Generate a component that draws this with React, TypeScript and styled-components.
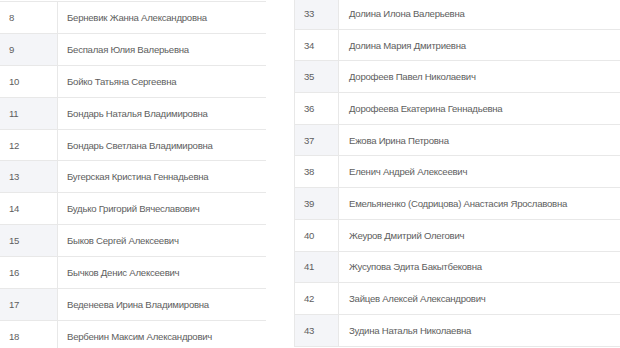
import styled, { createGlobalStyle } from "styled-components";

const GlobalStyle = createGlobalStyle`
  body {
    margin: 0;
    background: #fff;
    font-family: "Liberation Sans", Arial, sans-serif;
  }
`;

const left: [string, string][] = [
  ["8", "Берневик Жанна Александровна"],
  ["9", "Беспалая Юлия Валерьевна"],
  ["10", "Бойко Татьяна Сергеевна"],
  ["11", "Бондарь Наталья Владимировна"],
  ["12", "Бондарь Светлана Владимировна"],
  ["13", "Бугерская Кристина Геннадьевна"],
  ["14", "Будько Григорий Вячеславович"],
  ["15", "Быков Сергей Алексеевич"],
  ["16", "Бычков Денис Алексеевич"],
  ["17", "Веденеева Ирина Владимировна"],
  ["18", "Вербенин Максим Александрович"],
];

const right: [string, string][] = [
  ["33", "Долина Илона Валерьевна"],
  ["34", "Долина Мария Дмитриевна"],
  ["35", "Дорофеев Павел Николаевич"],
  ["36", "Дорофеева Екатерина Геннадьевна"],
  ["37", "Ежова Ирина Петровна"],
  ["38", "Еленич Андрей Алексеевич"],
  ["39", "Емельяненко (Содрицова) Анастасия Ярославовна"],
  ["40", "Жеуров Дмитрий Олегович"],
  ["41", "Жусупова Эдита Бакытбековна"],
  ["42", "Зайцев Алексей Александрович"],
  ["43", "Зудина Наталья Николаевна"],
];

const Page = styled.div`
  display: flex;
  align-items: flex-start;
  width: 620px;
  height: 348px;
  overflow: hidden;
`;

const Table = styled.div<{ $width: string; $offset: number; $numCol: number; $rowH: number }>`
  display: grid;
  grid-template-columns: ${(p) => p.$numCol}px 1fr;
  grid-auto-rows: ${(p) => p.$rowH}px;
  flex: 0 0 ${(p) => p.$width};
  margin-top: ${(p) => p.$offset}px;
  border-top: 1px solid #e8e8e8;
  border-left: 1px solid #e8e8e8;
  font-size: 9.6px;
  letter-spacing: -0.25px;
  color: #5e5e5e;
`;

const LeftTable = styled(Table)`
  margin-left: -1px;
`;

const RightTable = styled(Table)`
  margin-left: 28px;
`;

const Cell = styled.div<{ $pad: number }>`
  display: flex;
  align-items: center;
  padding-left: ${(p) => p.$pad}px;
  border-bottom: 1px solid #e8e8e8;
  white-space: nowrap;
`;

const NumCell = styled(Cell)<{ $shade: boolean }>`
  background: ${(p) => (p.$shade ? "#f4f5f8" : "#fff")};
  border-right: 1px solid #e8e8e8;
`;

const Rows = ({ data, numPad, namePad, shadeOdd }: { data: [string, string][]; numPad: number; namePad: number; shadeOdd: boolean }) => (
  <>
    {data.map(([n, name], i) => (
      <div key={n} style={{ display: "contents" }}>
        <NumCell $pad={numPad} $shade={(i % 2 === 1) === shadeOdd}>
          {n}
        </NumCell>
        <Cell $pad={namePad}>{name}</Cell>
      </div>
    ))}
  </>
);

export default function App() {
  return (
    <>
      <GlobalStyle />
      <Page>
        <LeftTable $width="266px" $offset={1} $numCol={58} $rowH={31.9}>
          <Rows data={left} numPad={9} namePad={9} shadeOdd />
        </LeftTable>
        <RightTable $width="340px" $offset={-3} $numCol={44} $rowH={31.7}>
          <Rows data={right} numPad={9} namePad={10} shadeOdd={false} />
        </RightTable>
      </Page>
    </>
  );
}
